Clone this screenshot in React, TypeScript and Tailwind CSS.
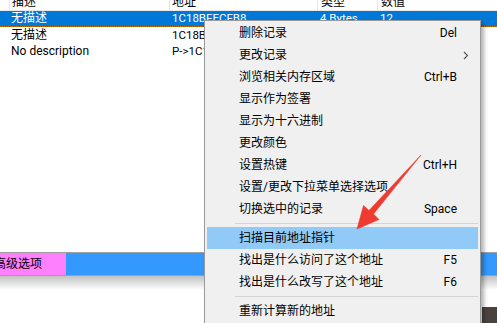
import React from "react";

type MenuItem =
  | { sep: true }
  | { sep?: false; label: string; hotkey?: string; sub?: boolean; active?: boolean };

const menuItems: MenuItem[] = [
  { label: "删除记录", hotkey: "Del" },
  { label: "更改记录", sub: true },
  { label: "浏览相关内存区域", hotkey: "Ctrl+B" },
  { label: "显示作为签署" },
  { label: "显示为十六进制" },
  { label: "更改颜色" },
  { label: "设置热键", hotkey: "Ctrl+H" },
  { label: "设置/更改下拉菜单选择选项" },
  { label: "切换选中的记录", hotkey: "Space" },
  { sep: true },
  { label: "扫描目前地址指针", active: true },
  { label: "找出是什么访问了这个地址", hotkey: "F5" },
  { label: "找出是什么改写了这个地址", hotkey: "F6" },
  { sep: true },
  { label: "重新计算新的地址" },
];

const rows = [
  { desc: "无描述", addr: "1C18BFECFB8", type: "4 Bytes", value: "12", selected: true },
  { desc: "无描述", addr: "1C18BFECFB8", type: "4 Bytes", value: "12" },
  { desc: "No description", addr: "P->1C18BFECFB8", type: "4 Bytes", value: "12" },
];

function ContextMenu() {
  return (
    <div className="absolute left-[204px] top-[20px] w-[277px] border border-[#9a9a9a] bg-[#f0f0f0] px-[2px] pt-px pb-2 shadow-[3px_3px_4px_rgba(0,0,0,0.3)]">
      {menuItems.map((item, i) =>
        item.sep ? (
          <div key={i} className="flex h-[7px] items-center pl-[28px]">
            <div className="h-px w-full bg-[#d4d4d4]" />
          </div>
        ) : (
          <div
            key={i}
            className={`flex h-[22px] items-center pl-[32px] pr-[21px] text-[12px] text-black ${
              item.active ? "bg-[#91c9f7]" : ""
            }`}
          >
            <span className="flex-1 whitespace-nowrap">{item.label}</span>
            {item.hotkey && <span className="whitespace-nowrap">{item.hotkey}</span>}
            {item.sub && (
              <svg width="6" height="9" viewBox="0 0 6 9" className="mr-[-12px]">
                <path d="M1 1l3.5 3.5L1 8" fill="none" stroke="#555" strokeWidth="1.1" />
              </svg>
            )}
          </div>
        )
      )}
    </div>
  );
}

function AddressList() {
  return (
    <div className="flex flex-1 flex-col bg-white">
      <div className="grid h-[11px] grid-cols-[10px_160px_148px_60px_1fr] overflow-hidden border-b border-[#e8e8e8] text-[12px] leading-[14px]">
        <div className="border-r border-[#e5e5e5]" />
        <div className="-mt-[5px] border-r border-[#e5e5e5] pl-[2px]">描述</div>
        <div className="-mt-[5px] border-r border-[#e5e5e5] pl-[2px]">地址</div>
        <div className="-mt-[5px] border-r border-[#e5e5e5] pl-[3px]">类型</div>
        <div className="-mt-[5px] pl-[3px]">数值</div>
      </div>
      {rows.map((r, i) => (
        <div
          key={i}
          className={`grid h-[16px] grid-cols-[10px_160px_148px_60px_1fr] items-center leading-[15px] ${
            r.selected ? "border-b border-dotted border-[#c86a00] bg-[#0078d7] text-white" : "text-black"
          }`}
        >
          <div />
          <div className="pl-px text-[12px]">{r.desc}</div>
          <div className="pl-[2px] text-[11.5px]">{r.addr}</div>
          <div className="pl-[2px] text-[11.5px]">{r.type}</div>
          <div className="pl-[2px] text-[11.5px]">{r.value}</div>
        </div>
      ))}
    </div>
  );
}

export default function App() {
  return (
    <div className="relative flex h-[323px] w-[497px] flex-col overflow-hidden bg-white font-['Roboto','Noto_Sans_CJK_SC',sans-serif]">
      <AddressList />

      <div className="flex h-[24px] border-y border-[#a0a0a0]">
        <div className="w-[66px] overflow-hidden bg-[#ff80ff]">
          <span className="-ml-[6px] block whitespace-nowrap text-[12px] leading-[22px] text-black">高级选项</span>
        </div>
        <div className="flex-1 bg-[#3399ff]" />
      </div>

      <div className="flex h-[47px] flex-col">
        <div className="h-[14px] bg-gradient-to-b from-[#c2c2c2] to-white" />
        <div className="flex flex-1 items-end justify-end bg-white">
          <div className="h-[16px] w-[15px] bg-[#4a423f]" />
        </div>
      </div>

      <ContextMenu />

      <svg className="pointer-events-none absolute left-0 top-0" width="497" height="323" viewBox="0 0 497 323">
        <path
          d="M421 155 L373.5 214 L379 219.5 L357 229 L363.5 205.5 L369 210.5 Z"
          fill="#ee3a2f"
          stroke="#ee3a2f"
          strokeWidth="0.6"
          strokeLinejoin="round"
        />
      </svg>
    </div>
  );
}
